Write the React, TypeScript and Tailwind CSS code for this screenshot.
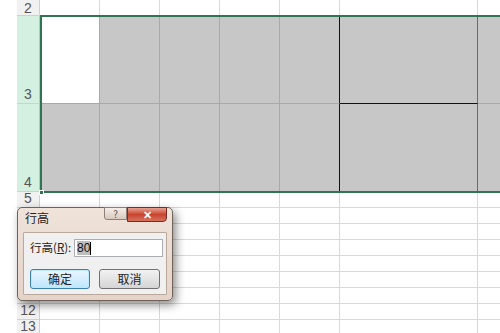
import { Fragment } from "react"

const cols = [60, 60, 60, 60, 60, 138, 40]

type CellSpec = { bg: string; border: string; right?: string; bottom?: string }

function Row({
  label,
  height,
  selected,
  cells,
  labelTop,
}: {
  label: string
  height: number
  selected?: boolean
  cells: CellSpec[]
  labelTop?: boolean
}) {
  return (
    <div className="flex shrink-0" style={{ height }}>
      <div className="w-[17px] shrink-0 bg-white" />
      <div
        className={`w-[23px] shrink-0 flex justify-center border-b border-r border-[#d0d0d0] text-[14px] leading-none text-[#555] ${
          labelTop ? "items-start pt-[1px]" : "items-end pb-[2px]"
        } ${selected ? "bg-[#d3f0e0] border-r-[#9fd5b7]" : "bg-[#f1f1f1]"}`}
      >
        {label}
      </div>
      {cells.map((c, i) => (
        <div
          key={i}
          className="shrink-0 box-border"
          style={{
            width: cols[i],
            background: c.bg,
            borderRight: `1px solid ${c.right ?? c.border}`,
            borderBottom: `1px solid ${c.bottom ?? c.border}`,
          }}
        />
      ))}
    </div>
  )
}

const W = "#ffffff"
const G = "#c7c7c7"
const LW = "#d9d9d9"
const LG = "#a9a9a9"

function whiteRow(): CellSpec[] {
  return cols.map(() => ({ bg: W, border: LW }))
}

export default function App() {
  const row3: CellSpec[] = [
    { bg: W, border: LG, bottom: LG },
    { bg: G, border: LG },
    { bg: G, border: LG },
    { bg: G, border: LG },
    { bg: G, border: LG, right: "#111" },
    { bg: G, border: LG, right: "#6a6a6a", bottom: "#111" },
    { bg: G, border: LG },
  ]
  const row4: CellSpec[] = [
    { bg: G, border: LG },
    { bg: G, border: LG },
    { bg: G, border: LG },
    { bg: G, border: LG },
    { bg: G, border: LG, right: "#111" },
    { bg: G, border: LG, right: "#6a6a6a" },
    { bg: G, border: LG },
  ]
  // rows 6-11 sit under the dialog, their numbers are not visible
  const small = ["5", "", "", "", "", "", "", "12", "13"]

  return (
    <div
      className="relative w-[500px] h-[333px] overflow-hidden bg-white"
      style={{ fontFamily: '"Liberation Sans", Arial, sans-serif' }}
    >
      <div className="flex flex-col">
        <Row label="2" height={16} cells={whiteRow()} labelTop />
        <Row label="3" height={88} selected cells={row3} />
        <Row label="4" height={88} selected cells={row4} />
        {small.map((l, i) => (
          <Fragment key={i}>
            <Row label={l} height={16} cells={whiteRow()} />
          </Fragment>
        ))}
      </div>

      {/* selection outline */}
      <div className="absolute left-[40px] top-[15px] w-[470px] h-[178px] border-2 border-[#2f7552] pointer-events-none" />
      <div className="absolute left-[39px] top-[190px] w-[5px] h-[5px] bg-[#2f7552] border border-white" />

      {/* dialog */}
      <div
        className="absolute left-[17px] top-[207px] w-[156px] h-[94px] rounded-[5px] border border-[#6f6259] bg-gradient-to-b from-[#efe3da] to-[#e4d3c8] shadow-[3px_4px_10px_rgba(0,0,0,0.45)] flex flex-col"
        style={{ fontFamily: '"Noto Sans CJK SC", "Liberation Sans", sans-serif' }}
      >
        <div className="flex h-[24px] shrink-0">
          <div className="flex-1 pl-[7px] pt-[4px] text-[12px] leading-none text-[#222]">行高</div>
          <div className="flex items-start -mt-[1px] mr-[5px]">
            <div className="w-[23px] h-[13px] rounded-bl-[3px] border border-[#8d7f75] bg-gradient-to-b from-[#f5ede7] to-[#d9c9be] flex items-center justify-center text-[10px] leading-none text-[#555]">
              ?
            </div>
            <div className="w-[40px] h-[15px] rounded-br-[4px] border border-[#7a2a20] bg-gradient-to-b from-[#e8a091] via-[#c8432f] to-[#d5725f] flex items-center justify-center text-[11px] font-bold leading-none text-white">
              ✕
            </div>
          </div>
        </div>
        <div className="mx-[5px] mb-[5px] flex-1 border border-[#b9a99c] bg-[#f0f0f0] rounded-[1px] flex flex-col px-[6px] pt-[6px]">
          <div className="flex items-center h-[18px]">
            <span className="whitespace-nowrap text-[11.5px] leading-none text-[#222] w-[44px] shrink-0">
              行高(<span className="underline">R</span>):
            </span>
            <div className="w-[89px] h-[18px] shrink-0 border border-[#abadb3] bg-white flex items-center pl-[2px]">
              <span
                className="bg-[#bdbdbd] text-[12px] leading-[14px] text-[#111]"
                style={{ fontFamily: '"Liberation Sans", Arial, sans-serif' }}
              >
                80
              </span>
              <span className="w-px h-[13px] bg-black" />
            </div>
          </div>
          <div className="flex gap-[9px] mt-[12px]">
            <div className="w-[61px] h-[20px] rounded-[3px] border border-[#3c7fb1] bg-gradient-to-b from-[#eaf6fd] to-[#bee6fd] shadow-[inset_0_0_0_1px_#c0e8fb] flex items-center justify-center text-[12px] leading-none text-[#222]">
              确定
            </div>
            <div className="w-[62px] h-[20px] rounded-[3px] border border-[#707070] bg-gradient-to-b from-[#f2f2f2] to-[#d5d5d5] flex items-center justify-center text-[12px] leading-none text-[#222]">
              取消
            </div>
          </div>
        </div>
      </div>
    </div>
  )
}
